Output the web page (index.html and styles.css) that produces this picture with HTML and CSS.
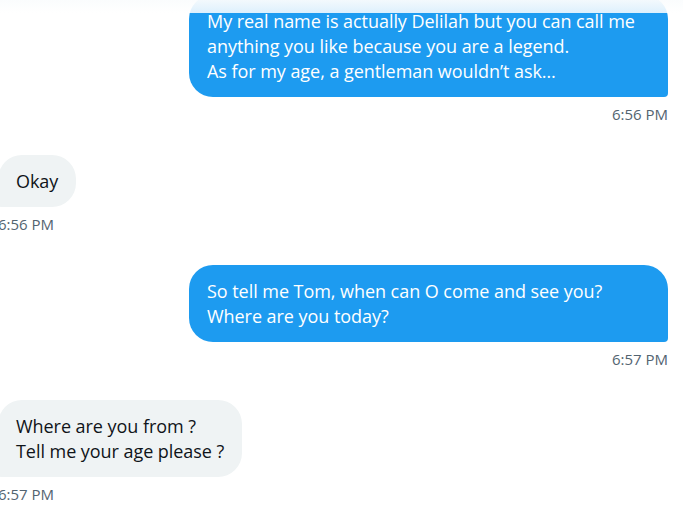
FILE: index.html
```html
<!DOCTYPE html>
<html>
<head>
<meta charset="utf-8">
<link rel="stylesheet" href="styles.css">
</head>
<body>
<div class="topfade"></div>
<div class="thread">
  <div class="group sent first">
    <div class="bubble">My real name is actually Delilah but you can call me<br>anything you like because you are a legend.<br>As for my age, a gentleman wouldn’t ask…</div>
    <div class="time">6:56 PM</div>
  </div>
  <div class="group recv">
    <div class="bubble">Okay</div>
    <div class="time">6:56 PM</div>
  </div>
  <div class="group sent">
    <div class="bubble">So tell me Tom, when can O come and see you?<br>Where are you today?</div>
    <div class="time">6:57 PM</div>
  </div>
  <div class="group recv">
    <div class="bubble">Where are you from ?<br>Tell me your age please ?</div>
    <div class="time">6:57 PM</div>
  </div>
</div>
</body>
</html>
```
FILE: styles.css
```css
html, body {
  margin: 0;
  padding: 0;
  background: #ffffff;
  overflow: hidden;
}
body {
  font-family: "Open Sans", "Noto Sans", sans-serif;
  width: 683px;
  height: 522px;
  position: relative;
}
.topfade {
  position: absolute;
  left: 0;
  top: 0;
  width: 100%;
  height: 13px;
  background: linear-gradient(to bottom, rgba(250,252,253,0.97), rgba(255,255,255,0.85));
  z-index: 2;
}
.thread {
  display: flex;
  flex-direction: column;
  gap: 31px;
  margin-left: -2px;
  padding-right: 15px;
  margin-top: -5px;
}
.group {
  display: flex;
  flex-direction: column;
  gap: 7px;
}
.group.sent { align-items: flex-end; }
.group.recv { align-items: flex-start; }
.bubble {
  font-size: 18px;
  line-height: 25px;
  padding: 13.5px 18px;
  letter-spacing: -0.05px;
}
.sent .bubble {
  width: 479px;
  box-sizing: border-box;
  background: #1d9bf0;
  color: #ffffff;
  border-radius: 24px 24px 4px 24px;
}
.recv .bubble {
  background: #eff3f4;
  color: #0f1419;
  border-radius: 24px 24px 24px 4px;
}
.time {
  font-size: 15px;
  line-height: 20px;
  color: #536471;
}
```
